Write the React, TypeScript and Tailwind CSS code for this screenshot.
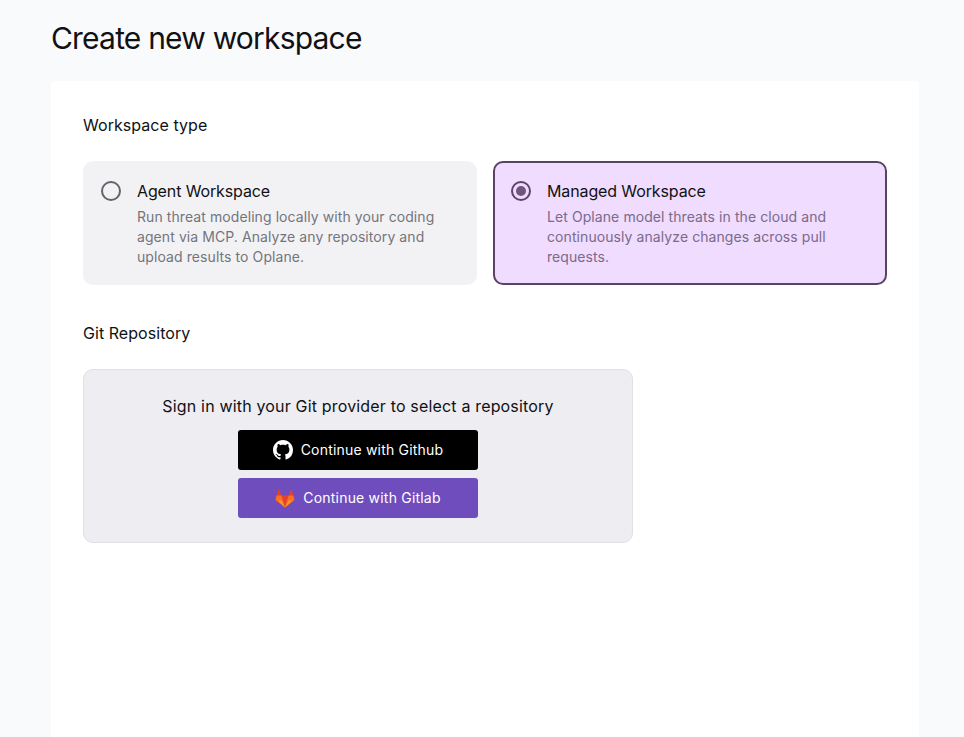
import React from "react";

function Radio({ selected }: { selected: boolean }) {
  return selected ? (
    <span className="mt-[1px] flex h-5 w-5 shrink-0 items-center justify-center rounded-full border-2 border-[#5e4568]">
      <span className="h-[10px] w-[10px] rounded-full bg-[#6f5680]" />
    </span>
  ) : (
    <span className="mt-[1px] h-5 w-5 shrink-0 rounded-full border-2 border-[#63646b]" />
  );
}

function TypeCard({ selected, title, desc }: { selected: boolean; title: string; desc: React.ReactNode }) {
  return (
    <div
      className={
        selected
          ? "flex h-[124px] flex-1 gap-4 rounded-[10px] border-2 border-[#5b4166] bg-[#efdcff] px-4 pt-[17px]"
          : "flex h-[124px] flex-1 gap-4 rounded-[10px] border-2 border-[#f2f2f5] bg-[#f2f2f5] px-4 pt-[17px]"
      }
    >
      <Radio selected={selected} />
      <div className="min-w-0">
        <div className="text-[16px] leading-[22px] tracking-[-0.12px] text-[#111114]">{title}</div>
        <div className={selected ? "mt-[5px] text-[14px] leading-[20px] tracking-[0.08px] text-[#7b6a8a]" : "mt-[5px] text-[14px] leading-[20px] tracking-[0.08px] text-[#74757c]"}>
          {desc}
        </div>
      </div>
    </div>
  );
}

function Github() {
  return (
    <svg viewBox="0 0 16 16" width="20" height="20" fill="#ffffff" aria-hidden="true">
      <path d="M8 0C3.58 0 0 3.58 0 8c0 3.54 2.29 6.53 5.47 7.59.4.07.55-.17.55-.38 0-.19-.01-.82-.01-1.49-2.01.37-2.53-.49-2.69-.94-.09-.23-.48-.94-.82-1.13-.28-.15-.68-.52-.01-.53.63-.01 1.08.58 1.23.82.72 1.21 1.87.87 2.33.66.07-.52.28-.87.51-1.07-1.78-.2-3.64-.89-3.64-3.95 0-.87.31-1.59.82-2.15-.08-.2-.36-1.02.08-2.12 0 0 .67-.21 2.2.82.64-.18 1.32-.27 2-.27s1.36.09 2 .27c1.53-1.04 2.2-.82 2.2-.82.44 1.1.16 1.92.08 2.12.51.56.82 1.27.82 2.15 0 3.07-1.87 3.75-3.65 3.95.29.25.54.73.54 1.48 0 1.07-.01 1.93-.01 2.2 0 .21.15.46.55.38A8.01 8.01 0 0 0 16 8c0-4.42-3.58-8-8-8z" />
    </svg>
  );
}

function Gitlab() {
  return (
    <svg viewBox="0 0 20 20" width="20" height="20" aria-hidden="true">
      <path fill="#e24329" d="M10 19.5 1 12.4a.9.9 0 0 1-.3-1L3.2 1.5a.4.4 0 0 1 .76 0L6.4 7.6h7.2l2.44-6.1a.4.4 0 0 1 .76 0l2.5 9.9a.9.9 0 0 1-.3 1z" />
      <path fill="#fc6d26" d="M10 19.5 6.4 7.6H1.6L.7 10.9a1.1 1.1 0 0 0 .4 1.5z" />
      <path fill="#fc6d26" d="M10 19.5 13.6 7.6h4.8l.9 3.3a1.1 1.1 0 0 1-.4 1.5z" />
      <path fill="#fca326" d="M10 19.5 6.4 12.6H3.2z" />
      <path fill="#fca326" d="M10 19.5l3.6-6.9h3.2z" />
    </svg>
  );
}

export default function App() {
  return (
    <div
      className="flex h-[737px] flex-col overflow-hidden bg-[#f9fafc] pl-[51px] pr-[45px]"
      style={{ fontFamily: "Inter, 'Liberation Sans', sans-serif" }}
    >
      <h1 className="mb-[24px] mt-[19px] text-[30px] font-normal leading-[38px] tracking-[-0.8px] text-[#111114]">Create new workspace</h1>
      <main className="flex-1 rounded-t-[4px] bg-white px-8 pt-[33px]">
        <h2 className="text-[16px] font-normal leading-[22px] tracking-[0.05px] text-[#111114]">Workspace type</h2>
        <div className="mt-[25px] flex gap-4">
          <TypeCard
            selected={false}
            title="Agent Workspace"
            desc={<>Run threat modeling locally with your coding<br />agent via MCP. Analyze any repository and<br />upload results to Oplane.</>}
          />
          <TypeCard
            selected
            title="Managed Workspace"
            desc={<>Let Oplane model threats in the cloud and<br />continuously analyze changes across pull<br />requests.</>}
          />
        </div>
        <h2 className="mt-[37px] text-[16px] font-normal leading-[22px] tracking-[0.05px] text-[#111114]">Git Repository</h2>
        <section className="mt-[25px] flex h-[174px] w-[550px] flex-col items-center rounded-[10px] border border-[#e0e0e5] bg-[#ededf2] pt-[26px]">
          <p className="text-[16px] leading-[20px] tracking-[0.17px] text-[#111114]">Sign in with your Git provider to select a repository</p>
          <button className="mt-[14px] flex h-10 w-60 items-center justify-center gap-2 rounded-[3px] bg-black pb-[1px] text-[14px] font-normal tracking-[0.2px] text-white">
            <Github />
            Continue with Github
          </button>
          <button className="mt-2 flex h-10 w-60 items-center justify-center gap-2 rounded-[3px] bg-[#6f4dbd] pb-[1px] text-[14px] font-normal tracking-[0.2px] text-white">
            <Gitlab />
            Continue with Gitlab
          </button>
        </section>
      </main>
    </div>
  );
}
